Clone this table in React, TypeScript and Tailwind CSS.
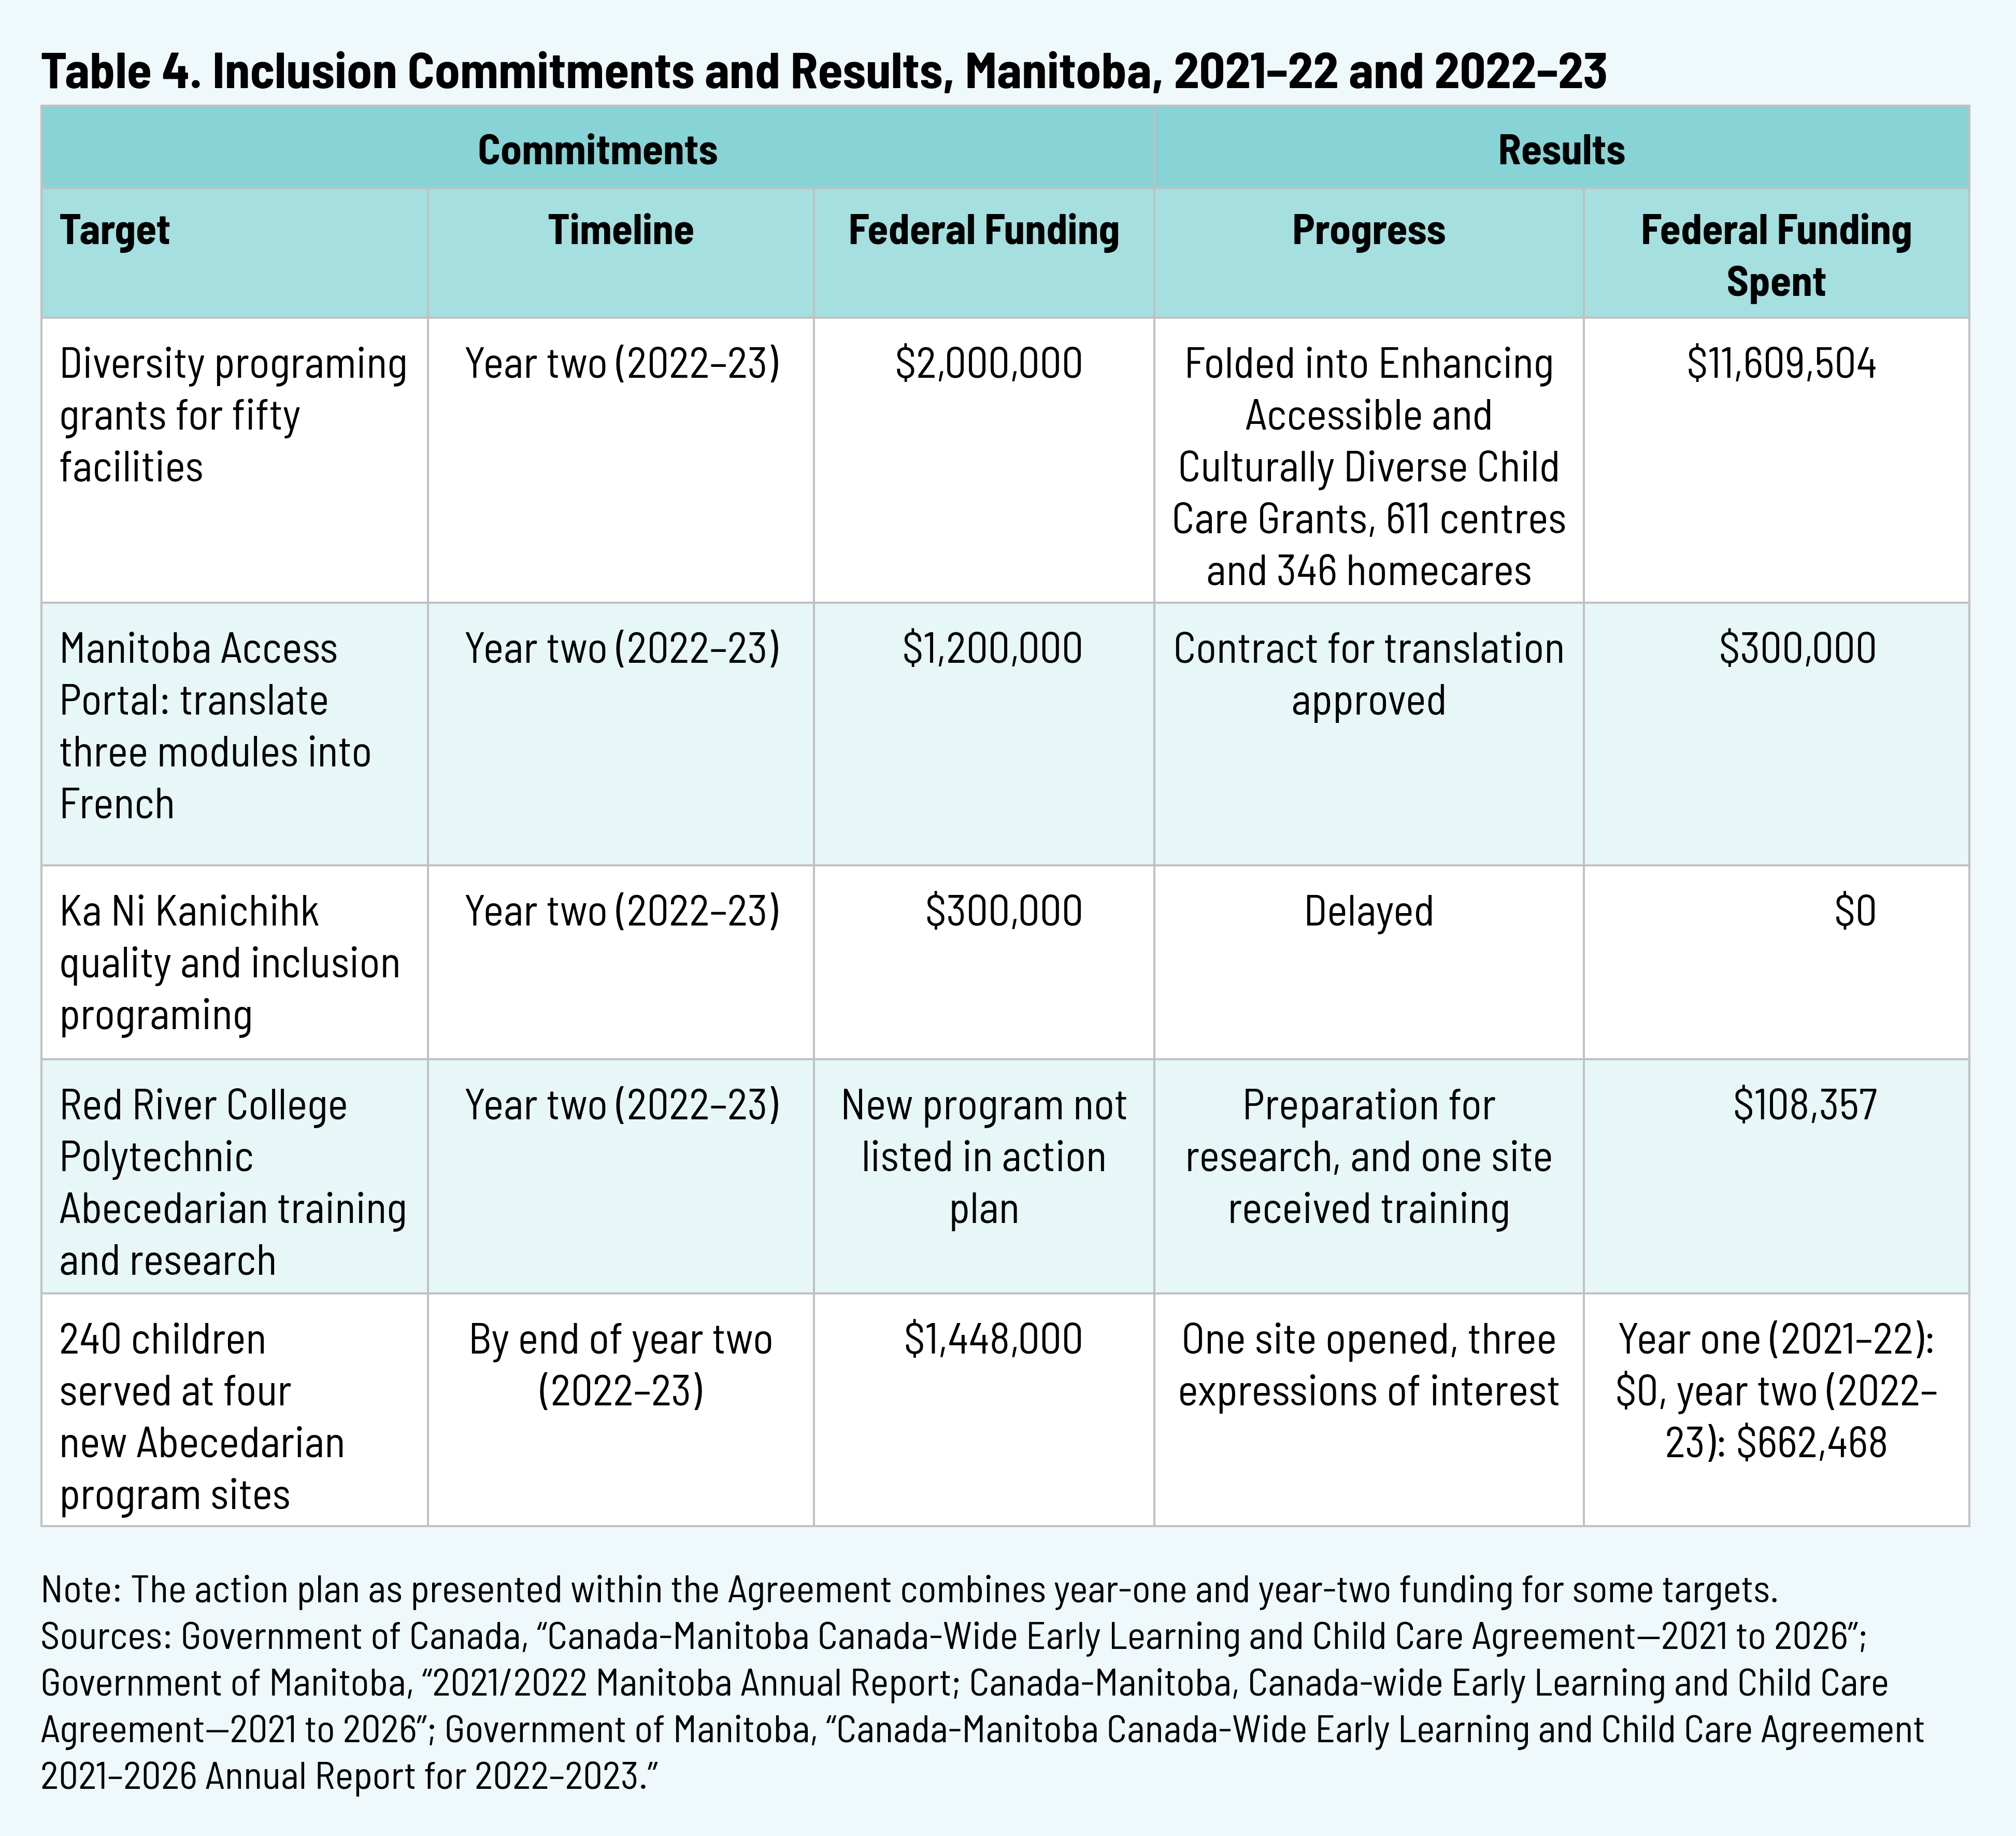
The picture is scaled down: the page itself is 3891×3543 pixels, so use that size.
import React from "react";

const FONT = { fontFamily: '"Barlow Semi Condensed", "Liberation Sans", sans-serif' };

type Align = "left" | "center" | "right3" | "right5";

function Lines({ lines }: { lines: string[] }) {
  return (
    <>
      {lines.map((l, i) => (
        <div key={i} className="whitespace-nowrap">
          {l}
        </div>
      ))}
    </>
  );
}

function BodyCell({ lines, align, bg }: { lines: string[]; align: Align; bg: string }) {
  const alignCls =
    align === "left"
      ? "text-left pl-[32px] pr-[8px]"
      : align === "center"
      ? "text-center px-[8px]"
      : align === "right3"
      ? "text-right pr-[135px] pl-[8px]"
      : "text-right pr-[176px] pl-[8px]";
  return (
    <div className={`${bg} ${alignCls} pt-[31px] text-[83.5px] leading-[100px] text-black`}>
      <Lines lines={lines} />
    </div>
  );
}

const rows: { bg: string; cells: { lines: string[]; align: Align }[] }[] = [
  {
    bg: "bg-white",
    cells: [
      { lines: ["Diversity programing", "grants for fifty", "facilities"], align: "left" },
      { lines: ["Year two (2022–23)"], align: "center" },
      { lines: ["$2,000,000"], align: "right3" },
      {
        lines: [
          "Folded into Enhancing",
          "Accessible and",
          "Culturally Diverse Child",
          "Care Grants, 611 centres",
          "and 346 homecares",
        ],
        align: "center",
      },
      { lines: ["$11,609,504"], align: "right5" },
    ],
  },
  {
    bg: "bg-[#e7f6f7]",
    cells: [
      { lines: ["Manitoba Access", "Portal: translate", "three modules into", "French"], align: "left" },
      { lines: ["Year two (2022–23)"], align: "center" },
      { lines: ["$1,200,000"], align: "right3" },
      { lines: ["Contract for translation", "approved"], align: "center" },
      { lines: ["$300,000"], align: "right5" },
    ],
  },
  {
    bg: "bg-white",
    cells: [
      { lines: ["Ka Ni Kanichihk", "quality and inclusion", "programing"], align: "left" },
      { lines: ["Year two (2022–23)"], align: "center" },
      { lines: ["$300,000"], align: "right3" },
      { lines: ["Delayed"], align: "center" },
      { lines: ["$0"], align: "right5" },
    ],
  },
  {
    bg: "bg-[#e7f6f7]",
    cells: [
      { lines: ["Red River College", "Polytechnic", "Abecedarian training", "and research"], align: "left" },
      { lines: ["Year two (2022–23)"], align: "center" },
      { lines: ["New program not", "listed in action", "plan"], align: "center" },
      { lines: ["Preparation for", "research, and one site", "received training"], align: "center" },
      { lines: ["$108,357"], align: "right5" },
    ],
  },
  {
    bg: "bg-white",
    cells: [
      { lines: ["240 children", "served at four", "new Abecedarian", "program sites"], align: "left" },
      { lines: ["By end of year two", "(2022–23)"], align: "center" },
      { lines: ["$1,448,000"], align: "right3" },
      { lines: ["One site opened, three", "expressions of interest"], align: "center" },
      { lines: ["Year one (2021–22):", "$0, year two (2022–", "23): $662,468"], align: "center" },
    ],
  },
];

const notes = [
  "Note: The action plan as presented within the Agreement combines year-one and year-two funding for some targets.",
  "Sources: Government of Canada, “Canada-Manitoba Canada-Wide Early Learning and Child Care Agreement—2021 to 2026”;",
  "Government of Manitoba, “2021/2022 Manitoba Annual Report; Canada-Manitoba, Canada-wide Early Learning and Child Care",
  "Agreement—2021 to 2026”; Government of Manitoba, “Canada-Manitoba Canada-Wide Early Learning and Child Care Agreement",
  "2021–2026 Annual Report for 2022–2023.”",
];

const headCls = "bg-[#a6dfe0] pt-[23px] text-center text-[82px] leading-[100px] font-bold";

export default function App() {
  return (
    <div className="w-[3891px] h-[3543px] bg-[#eff8fa] pl-[78px] pt-[71px] text-black" style={FONT}>
      <h1 className="text-[98px] leading-[120px] font-bold whitespace-nowrap mb-[11px]">
        Table 4. Inclusion Commitments and Results, Manitoba, 2021–22 and 2022–23
      </h1>

      <div className="grid w-[3725px] bg-[#bfc1c2] p-[4px] gap-[4px] grid-cols-[742px_741px_653px_825px_740px] grid-rows-[155px_246px_546px_503px_370px_448px_445px]">
        <div className="col-span-3 bg-[#88d3d5] pt-[28px] text-center text-[82px] leading-[100px] font-bold">
          Commitments
        </div>
        <div className="col-span-2 bg-[#88d3d5] pt-[28px] text-center text-[82px] leading-[100px] font-bold">
          Results
        </div>

        <div className="bg-[#a6dfe0] pt-[23px] pl-[32px] text-left text-[82px] leading-[100px] font-bold">Target</div>
        <div className={headCls}>Timeline</div>
        <div className={headCls}>Federal Funding</div>
        <div className={headCls}>Progress</div>
        <div className={headCls}>
          <div>Federal Funding</div>
          <div>Spent</div>
        </div>

        {rows.map((r, ri) =>
          r.cells.map((c, ci) => <BodyCell key={`${ri}-${ci}`} lines={c.lines} align={c.align} bg={r.bg} />)
        )}
      </div>

      <div className="mt-[70px] text-[75px] leading-[90px]">
        {notes.map((n, i) => (
          <div key={i} className="whitespace-nowrap">
            {n}
          </div>
        ))}
      </div>
    </div>
  );
}
